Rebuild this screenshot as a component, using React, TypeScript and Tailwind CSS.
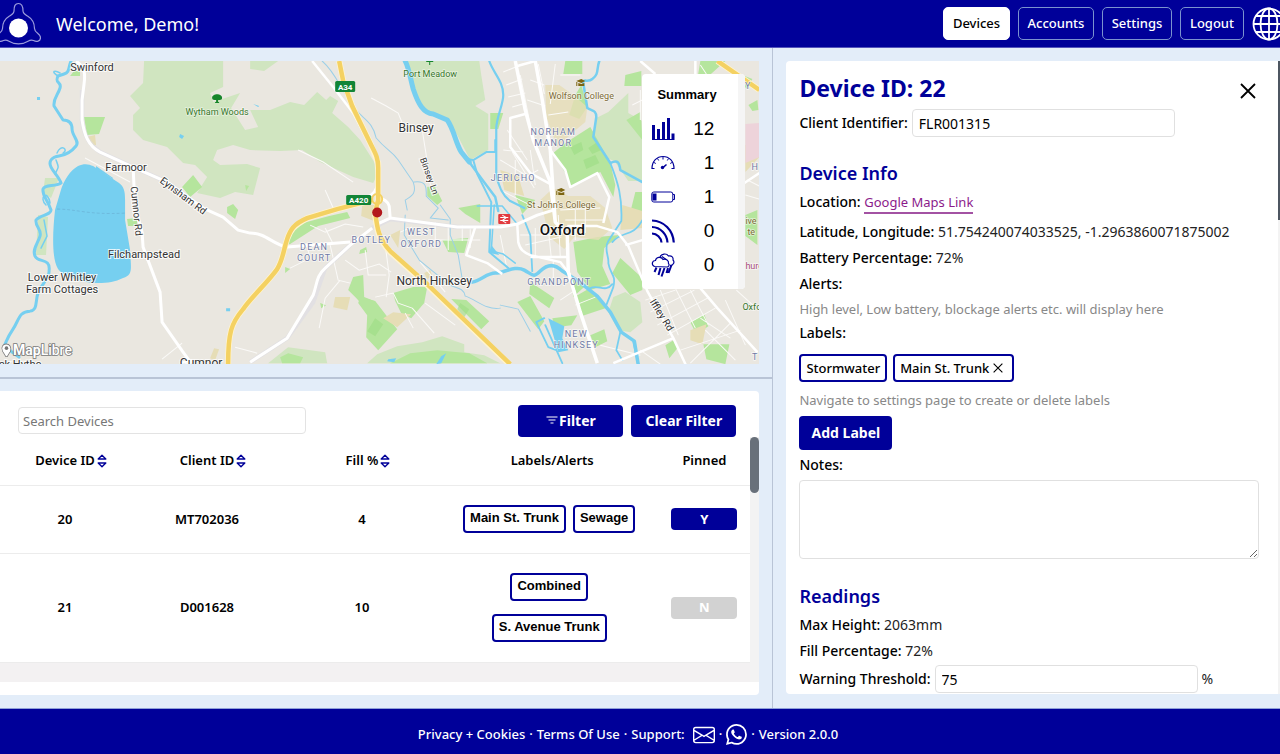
import type { ReactNode } from 'react';
import { BsEnvelope, BsWhatsapp } from 'react-icons/bs';

type Device = {
  id: number;
  clientId: string;
  fill: number;
  labels: string[];
  pinned: boolean;
};

const devices: Device[] = [
  { id: 20, clientId: 'MT702036', fill: 4, labels: ['Main St. Trunk', 'Sewage'], pinned: true },
  { id: 21, clientId: 'D001628', fill: 10, labels: ['Combined', 'S. Avenue Trunk'], pinned: false },
];

function Logo() {
  return (
    <svg width="41" height="45" viewBox="0 0 41 45" className="shrink-0" aria-hidden="true">
      <path
        d="M14 10C14 5 15 2.500 18.500 2.500S23 5 23 10c0 2.500 2 3.500 4.500 5 5 3 7 7 7 12.500 0 4.500 6 5 6 9 0 4-4 4.500-7 3-2-1-3.500-.5-5.500.7-5.500 3.500-13.500 3.500-19 0-2-1.200-3.500-1.700-5.500-.7-3 1.500-7 1-7-3s6-4.500 6-9C2.500 22 4.500 18 9.500 15c2.500-1.500 4.500-2.500 4.500-5z"
        fill="none"
        stroke="#9c9cdc"
        strokeWidth="1.200"
      />
      <circle cx="18.500" cy="27" r="9.500" fill="#fff" />
    </svg>
  );
}

function GlobeIcon() {
  return (
    <svg width="34" height="34" viewBox="0 0 34 34" fill="none" stroke="#fff" strokeWidth="1.800" aria-hidden="true">
      <circle cx="17" cy="17" r="15.500" />
      <ellipse cx="17" cy="17" rx="8.500" ry="15.500" />
      <path d="M17 1.500v31M1.500 17h31M4 9h26M4 25h26" />
    </svg>
  );
}

function SortIcon() {
  return (
    <svg width="10" height="14" viewBox="0 0 10 14" fill="none" stroke="#000099" strokeWidth="1.400" strokeLinejoin="round" aria-hidden="true">
      <path d="M1.200 5L5 1.200 8.800 5zM1.200 9L5 12.800 8.800 9z" />
    </svg>
  );
}

function CloseIcon({ size }: { size: number }) {
  return (
    <svg width={size} height={size} viewBox="0 0 16 16" stroke="currentColor" strokeWidth="1.800" aria-hidden="true">
      <path d="M1 1l14 14M15 1L1 15" />
    </svg>
  );
}

function FilterIcon() {
  return (
    <svg width="12" height="9" viewBox="0 0 12 9" stroke="#fff" strokeWidth="1.200" aria-hidden="true">
      <path d="M0.500 1h11M2.500 4h7M4.500 7h3" />
    </svg>
  );
}

/* Summary icons */
function LevelIcon() {
  return (
    <svg width="24" height="24" viewBox="0 0 24 24" fill="#000099" aria-hidden="true">
      <path d="M1 8h3v14H1zM6 12h3v10H6zM11 5h3v17h-3zM16 1h3v21h-3zM20.500 16.500h3V22h-3zM1 22h22.500v1H1z" />
    </svg>
  );
}

function GaugeIcon() {
  return (
    <svg width="24" height="24" viewBox="0 0 24 24" fill="none" stroke="#000099" aria-hidden="true">
      <path d="M3.500 17.500H1C1 10 6 5.500 12 5.500S23 10 23 17.500h-2.500" strokeWidth="1.200" />
      <path d="M12 6v2.500M6.500 7.500l1.200 2M17.500 7.500l-1.200 2M3 11.500l1.800 1M21 11.500l-1.800 1" strokeWidth="1" />
      <path d="M11.500 17l4-3.500" strokeWidth="1.600" />
      <circle cx="11.500" cy="16.500" r="1.700" fill="#000099" stroke="none" />
    </svg>
  );
}

function BatteryIcon() {
  return (
    <svg width="24" height="24" viewBox="0 0 24 24" fill="none" stroke="#000099" aria-hidden="true">
      <rect x="0.800" y="7" width="21" height="10" rx="2" strokeWidth="1" />
      <path d="M22 9.500h1.500v5H22" strokeWidth="1" />
      <rect x="1.500" y="8.500" width="4" height="7" fill="#000099" stroke="none" />
    </svg>
  );
}

function SignalIcon() {
  return (
    <svg width="24" height="24" viewBox="0 0 24 24" fill="none" stroke="#000099" strokeWidth="2.200" aria-hidden="true">
      <path d="M1 1.500C13 2 22 11 22.800 23.500M1 8c8.500.3 15 7 15.500 15.500M1 14.500c5 .2 9 4 9.500 9" />
    </svg>
  );
}

function StormIcon() {
  return (
    <svg width="24" height="24" viewBox="0 0 24 24" fill="none" stroke="#000099" strokeWidth="1.200" aria-hidden="true">
      <path d="M3.500 13.500C0 12 1 7.500 4.500 7.500 5 4 10 3 12 6.500c3-1 6 1 5.500 4 1.500 1.500 0 3.500-1.500 3.500z" />
      <path d="M9 4C10.500.5 15.500 0 17.500 3c3.500-.5 5 1.500 4.500 4 2 2 .5 5.500-3 5.500M11 3.500l4 3" />
      <path d="M5.500 14.500L3.500 19M9.500 15l-2 7M13.500 15l-3 8.500M17 15l-1.500 5M20.500 12l-3 8" strokeWidth="2" />
    </svg>
  );
}

const summary = [
  { name: 'Level', icon: <LevelIcon />, count: 12 },
  { name: 'Blockage', icon: <GaugeIcon />, count: 1 },
  { name: 'Battery', icon: <BatteryIcon />, count: 1 },
  { name: 'Signal', icon: <SignalIcon />, count: 0 },
  { name: 'Storm', icon: <StormIcon />, count: 0 },
];

function MapView() {
  return (
    <svg
      viewBox="0 61 759 303"
      preserveAspectRatio="xMinYMin slice"
      className="block h-full w-full font-['Roboto','Noto_Sans',sans-serif]"
      role="img"
      aria-label="Map of Oxford"
    >
      <rect x="0" y="61" width="759" height="303" fill="#eae7e0" />

      {/* Woodland and meadows */}
      <g fill="#d0e5c0">
        <path d="M144 61H223V87L210 93 213 102 240 93 231 108 245 130 258 127 250 110 270 110 290 102 304 105 317 92 326 100 330 96 338 101 332 113 348 127 360 140 374 162 376 177 373 183 353 177 320 162 302 150 280 151 250 150 233 145 217 150 213 160 220 165 247 164 260 168 253 195 235 192 220 198 197 193 207 177 195 165 183 163 167 147 143 140 133 130 133 115 140 108 130 96 143 83z" />
        <path d="M407 61H479L481 75 485 100 475 106 488 114V150L470 160 457 135 447 121 423 112 412 85z" />
        <path d="M250 61h28l-14 10-14-2z" />
        <path d="M596 118l12-6 20-19v20l14 8v60h-14l-14-20-13-5-8-19z" />
        <path d="M613 297l12-5 15 10 2 20-12 10-12-2-10-18z" />
        <path d="M367 363l10-9 20-8 25-4 20-6 22 8 0 8 20 3 16 8z" />
        <path d="M268 363l20-16 15 2 22 3 2 11z" />
        <path d="M45 178h14l-8 20-8-5zM38 215l10 2-2 38-10 0z" />
      </g>

      {/* Parks */}
      <g fill="#b5e59d">
        <path d="M553 153l12-10 25-16 9 16 11 20 5 22-2 12-13-25-29 15-6-14z" />
        <path d="M573 242l24-5 22-2-15 13-2 18 8 18-20 6-13-18z" />
        <path d="M620 258l22 20v12l-12 5-18-22zM574 297l14-8 20 18-27 9zM570 275l16 10-13 12z" />
        <path d="M530 282l24 16-5 10-20-14zM517 302l13-6 14 25-6 8zM552 318l25-3-6 10-16 2z" />
        <path d="M284 245l6-12 13-10 26-7 18-4 3 6-32 8-28 18z" />
        <path d="M353 277l10-2 1 22 10 4-6 10-12-13-8-8z" />
        <path d="M360 297l15 4 14 18 8 10-19 21-12-13 1-22-9-12z" />
        <path d="M393 293l20-6 14 0-3 16-13 15-10-5-6-12z" />
        <path d="M451 299l15 1 23 21-8 8zM442 240l26-2-4 15-16-1zM458 208l22-4v19l-15-9z" />
        <path d="M84 117h17l4 0-6 17-12 1zM193 175l9 12-12 10-8-10zM227 207l6-3 5 6-3 9-8-6z" />
        <path d="M427 187l7-2 8 16-5 4-10-9zM70 76l4-5 6 0v5zM127 219l10-1v8h-9z" />
        <path d="M390 363l20-10 27-3 32 3 18 10zM280 357l8-4 15 4-3 6h-18z" />
        <path d="M640 112l-14 8 16 20zM625 75l16-4v15h-17zM565 61h17v13h-19zM575 95l6-10 6 22-8 12-10-4z" />
        <path d="M700 61h25l-20 18h-8zM737 73l15 6-6 10zM748 105l9-5 1 10-6 1z" />
        <path d="M703 344h26l-4 20-19-5zM690 322l14-8 4 12-12 8zM665 345l8-5 4 8-8 10zM745 215l12-5v35l-12-9zM635 192h7v20h-12z" />
        <path d="M590 335l14-6 3 12-12 6zM515 195l20 5-13 14zM503 113l-5 16-8 0v-16z" />
        <path d="M360 250l6-3 1 5-8 2zM285 267l5 2-5 4zM320 303l6 2-5 3zM245 185l4 1-3 5z" />
      </g>
      <g fill="#9ddc84" opacity=".6">
        <path d="M570 147l11-5 2 8-9 5zM583 160l12-5 4 8-13 6zM588 148l9-6 4 8-9 4zM375 318l8 6-8 12-8-5zM460 303l9 6-5 8-7-8z" />
      </g>

      {/* Built-up and campus areas */}
      <g fill="#e6ddb6">
        <path d="M545 85h14l14 10 14 12-2 15-12 10-16 15-11-30zM540 200l13-12 15 8 22 0 15 12 7 20-14 12-24-3-10 12-15-12z" opacity=".8" />
        <path d="M335 297h15l-3 13-14-3zM383 318l10-6 18 2-14 13zM362 205h14l-2 16-13-5zM390 235l10-5-2 18zM87 137l8-2 1 10-6 1zM214 348l5 1-4 11-5-2zM424 273l6-3 2 6-5 3z" />
        <path d="M622 205l20 6v17l-22 2zM500 170l18 6 6 20-20-6zM690 330l16-6-4 20-12-4zM745 145h14v12l-14 15zM508 178l10-3 4 15-9 2z" />
      </g>
      <path d="M745 124l14-1v34l-14 6z" fill="#edd3da" />

      {/* Minor streets */}
      <g fill="none" stroke="#fbfaf8" strokeWidth="1">
        <path d="M371 98l15 8 12 7 4 10 12 5M422 130l4 25v20l7 15M325 190l8 18M298 150l25 12 30 20" />
        <path d="M310 225l15 7 20-8 18 3M330 245l8 35 12 3M345 260l14 10 20-6 12 8M365 250l3 25 18 0M385 245l4 30-3 22M375 297l18-4 5 10 14 5M340 280l-15 18-6 30M290 268l20-10-4-15M325 228l8 16M405 313l8 15M425 303l30 22M412 308l22 25" />
        <path d="M400 232l12-5M435 222v24M448 224v26M462 225v16M470 228v20M430 240h50M420 262l25 30M500 235l6 30" />
        <path d="M503 72l20-8M506 85l16-6M508 97l17-4M512 107l14-4M520 75l10 50M530 80l14 5M527 100l18 6M535 128l15 6M538 64l6 30M507 130l20 30M512 152l22 36M500 160l34 20M503 150l20 2M500 190l28 14M515 160v35M530 150l5 35M520 180l18-10M555 64l-5 40M560 75h20M548 115l20-3" />
        <path d="M520 235h30M525 245l36-8M535 228v28M548 228l3 30M558 215l2 42M575 210v30M585 205v28M565 220h40M560 210l40-2" />
        <path d="M553 260v20M575 290l-15 10M575 305l20-8M600 345l40 10M645 300l30-10M650 312l44-22M657 325l52-28M667 335l48-27M660 290l18 45M675 288l20 40M690 290l18 35M700 318l30 20M680 350l60-20M690 363l40-40M725 300l20 45M736 290l22 20M705 330l30 30M640 350l20 14" />
        <path d="M632 105l10-5M640 90v30M700 65l6 9M747 180l12 6M745 195l14 4M85 158l45 24M182 343l-20 16M235 347l22 6" />
      </g>

      {/* Water */}
      <g fill="none" stroke="#76cff0" strokeLinejoin="round" strokeLinecap="round">
        <path d="M71 61c-3 7-1 11-7 13l-6 2c-4 8 4 5 2 12s-7 10-6 18l9 14c5 0 9 2 9 9s8 12 4 17-10 9-17 10-11 5-8 11 8 10 10 16c-6 4-16 1-18 6-1 7 4 9 8 21 0 5-11 5-15 10-1 7 6 9 4 16s-8 13-5 20 16 1 14 15c1 6-8 14-11 22s0 17-8 18c-11 0-11 9-17 18s-6 11-8 15l7 8 7 5" strokeWidth="3" />
        <path d="M58 76c-8-5-3-6 2-3M57 153c4-10 12-3 6 0M56 160c3 8 3 6-1 14M46 205c-8-8 2-16 4-2M44 220l3 16-6 12" strokeWidth="1.500" />
        <path d="M405 61c4 8 5 17 8 28 5 15 10 24 20 25l14 6c7 10 8 22 14 32l8 10" strokeWidth="5" />
        <path d="M469 162l14 19 12 16 3 14" strokeWidth="2.500" />
        <path d="M456 140c6 14 10 20 17 20l13-8h9v-12M473 160l4 14 14 28-2 50 19 16" strokeWidth="2" />
        <path d="M489 61c4 12 14 20 14 34 0 10-7 22-7 34v45c2 12 7 22 14 27l14 7" strokeWidth="2.200" />
        <path d="M477 206h25l15 18M494 205l-3 46 12 3 12 9" strokeWidth="1.500" />
        <path d="M472 282c9-2 15-9 23-9s20-8 29-3 9 8 16 1 14-8 22 0l16 10 19 15 13 16 11 20 13 9 4 24" strokeWidth="3.500" />
        <path d="M599 61c-3 8 0 13-7 18-4 4-10-1-9 4l4 25c5 3 9 2 9 9l-3 20 17 26c8-4 9 0 10 7l22 12" strokeWidth="2.500" />
        <path d="M610 163c8 20 12 34 11 58l-13 20c-5 8 1 15 0 22 2 12 8 11 5 24l-7 18M620 332l-4 18 6 10M633 342l5 22M642 220c-10 18-20 10-30 22M590 288c8-4 15 5 22-4M522 215l8 20 2 36M545 325l17 38M544 318l-8 4 12 25 8 3" strokeWidth="1.800" />
        <path d="M322 61c14 12 18 28 30 43 8 15 20 15 24 34 10 12 15 12 22 22l15 22c4 12-2 14-8 18l2 10M414 182c14-2 12 8 12 14l12 12-8 10 18 2M405 215l-1 20 15 25 22 18c8 12 22 6 24 18 12 4 20 14 35 12M440 205l10 14v16l8 20 4 24M500 305l18 4 12 22" strokeWidth="1" stroke="#9bcfe8" />
      </g>
      <g fill="#76cff0">
        <path d="M55 210l5-17c4-14 10-22 18-27 6-3 11-2 15 0l26 17c5 4 6 8 6 17v20l5 30c1 20 3 24-7 28-8 4-15 5-25 5-14 0-34-6-40-14-7-12-5-40-3-59z" />
        <path d="M548 318l16 8-2 12 6 12-10 2zM96 166l17 12 0 1-17-10zM180 134l4 2-2 3-3-2zM37 97h3v3h-3zM253 104l6 2-1 1zM226 308h4v3h-4zM388 359l8-1-2 4-7-1zM436 364l5-8 5-3-5 10zM491 245l8 10-10-2z" />
      </g>
      <path d="M57 209c20 0 30 6 68 4" fill="none" stroke="#6ab2d6" strokeDasharray="3 2" strokeWidth=".7" />

      {/* Main roads */}
      <g fill="none" stroke="#dcdce4" strokeWidth="4.500" opacity=".6">
        <path d="M82 90v30c2 14 6 24 18 32l33 15 34 15M372 228l18-9 67 8h43M350 245l-25 23-12 34-26 36-37 24" />
      </g>
      <g fill="none" stroke="#fff" strokeWidth="3" strokeLinejoin="round">
        <path d="M76 61c10 7 9 15 8 23l-2 16v20c2 14 6 26 18 32l33 15 34 15 36 26 20 9 15 13 12 3c16 0 22 11 37 14l63-5" />
        <path d="M133 167l2 40 7 25 1 15 17 45 2 30 21 30 8 11" />
        <path d="M377 224l13-6 67 9h43l17-3 20-9 16-5M390 218l-1-12c-1-5-6-7-11-9M372 228l-22 17-25 23c-9 8-8 16-12 27l-26 43-37 24" />
        <path d="M312 61l21 26 20 26 20 37c4 12 5 28 4 36-3 8-8 12-17 12" strokeWidth="2.500" />
        <path d="M515 61l10 49 8 30 17 42 5 40M535 61l7 39 8 50 5 72 12 13 1 37 12 40 17 51" strokeWidth="3.500" />
        <path d="M525 114l-15 4v29l20 26 22 12M550 150l15 20 5 17 27-14 12 24-6 26M517 224l1 18c2 8 5 10 12 13l30 7 10 13M567 226h30l20 6 11 14 19 45 26 47 13 28M673 338l-60 25M700 288l17 20 40 44M640 61l15 13M695 61v13M738 187l21-14M517 66l18-5M475 227l-9 28 21 8 15 11M530 257h37M625 245l17-5M180 363l12-3" strokeWidth="2.500" />
      </g>
      <g fill="none" stroke="#fff4cf" strokeWidth="6">
        <path d="M339 61l4 20 9 25 18 37 8 20v37l-3 15c2 16 3 24 15 37l37 33 82 79M372 200l-35 9-30 9c-14 8-17 12-20 21-4 12-4 20-10 30-10 14-26 28-34 40-12 14-15 24-15 55M717 61l42 29" />
      </g>
      <g fill="none" stroke="#f4d162" strokeWidth="4.500">
        <path d="M339 61l4 20 9 25 18 37c5 10 8 14 8 25v32l-3 12c2 16 3 26 15 39l37 33 83 80M372 200l-35 9-30 9c-14 6-17 12-20 21-4 12-4 20-10 30-10 14-26 28-34 40-12 14-15 24-15 55M717 61l42 29" />
        <circle cx="377" cy="199" r="5" strokeWidth="2" />
      </g>

      {/* Road shields */}
      <g fill="#128537">
        <rect x="335" y="81" width="20" height="11" rx="1.500" />
        <rect x="346" y="195" width="25" height="10" rx="1.500" />
      </g>
      <g fill="#fff" fontSize="8" fontWeight="700" textAnchor="middle">
        <text x="345" y="90">A34</text>
        <text x="358.500" y="203">A420</text>
      </g>

      {/* Place names */}
      <g fill="#333" stroke="#fff" strokeOpacity=".8" strokeWidth="2" paintOrder="stroke" fontSize="11" textAnchor="middle">
        <text x="92" y="71">Swinford</text>
        <text x="126" y="171">Farmoor</text>
        <text x="144" y="258">Filchampstead</text>
        <text x="62" y="281">Lower Whitley</text>
        <text x="62" y="293">Farm Cottages</text>
        <text x="416" y="132" fontSize="12">Binsey</text>
        <text x="434" y="285" fontSize="12">North Hinksey</text>
        <text x="201" y="367" fontSize="12">Cumnor</text>
        <text x="20" y="368">ck Hythe</text>
        <text x="562" y="235" fontSize="15" fontWeight="500" fill="#111">Oxford</text>
        <text x="183" y="199" fontSize="10" transform="rotate(37 183 196)">Eynsham Rd</text>
        <text x="136" y="214" fontSize="10" transform="rotate(84 136 211)">Cumnor Rd</text>
        <text x="429" y="179" fontSize="9" transform="rotate(70 429 176)">Binsey Ln</text>
        <text x="661" y="318" fontSize="10" transform="rotate(58 661 315)">Iffley Rd</text>
      </g>
      <g fill="#6f7aa5" stroke="#fff" strokeOpacity=".7" strokeWidth="1.500" paintOrder="stroke" fontSize="9" letterSpacing="1.200" textAnchor="middle">
        <text x="314" y="250">DEAN</text>
        <text x="314" y="261">COURT</text>
        <text x="371" y="243">BOTLEY</text>
        <text x="421" y="235">WEST</text>
        <text x="421" y="247">OXFORD</text>
        <text x="553" y="135">NORHAM</text>
        <text x="553" y="146">MANOR</text>
        <text x="513" y="181">JERICHO</text>
        <text x="559" y="285">GRANDPONT</text>
        <text x="576" y="337">NEW</text>
        <text x="576" y="348">HINKSEY</text>
        <text x="748" y="89">Y</text>
        <text x="755" y="170">H</text>
        <text x="755" y="360">T</text>
      </g>
      <g fill="#37762b" stroke="#fff" strokeOpacity=".5" strokeWidth="1.500" paintOrder="stroke" fontSize="9" textAnchor="middle">
        <text x="217" y="115">Wytham Woods</text>
        <text x="430" y="77">Port Meadow</text>
        <text x="742" y="310" textAnchor="start">Oxford</text>
      </g>
      <g fill="#17852b">
        <path d="M212 98c0-5 10-5 10 0 0 2-2 2-4 2v2h1v1h-4v-1h1v-2c-2 0-4 0-4-2zM426 61h7v1h-3v3h-1v-3h-3z" />
      </g>
      <g fill="#7d6a35" stroke="#fff" strokeOpacity=".6" strokeWidth="1.500" paintOrder="stroke" fontSize="9" textAnchor="middle">
        <text x="581" y="99">Wolfson College</text>
        <text x="561" y="208">St John’s College</text>
        <text x="745" y="224" textAnchor="start">ive</text>
        <text x="747" y="235" textAnchor="start">te</text>
        <text x="745" y="269" textAnchor="start" fill="#a84b7b">hurch</text>
      </g>
      <g fill="#7d6510">
        <path d="M576 81l5-2 4 2-4 2zM578 83l3 1 3-1v3h-6zM577 82v4h-1v-4zM556 190l5-2 4 2-4 2zM558 192l3 1 3-1v3h-6zM557 191v4h-1v-4z" />
      </g>

      {/* Railway station */}
      <rect x="498" y="214" width="12" height="10" rx="1" fill="#e23b3f" />
      <path d="M500 217.500h8M500 220.500h8M502 215l4 2.500-4 3 4 2.500" stroke="#fff" fill="none" />

      {/* Device pin */}
      <circle cx="377" cy="212.500" r="5" fill="#b3181c" />

      {/* Attribution */}
      <g fill="#fff" stroke="#777" strokeWidth="1.600" paintOrder="stroke">
        <path d="M6 356l-3-5c-4-9 10-9 7 0l-3 5z" />
        <circle cx="6.500" cy="348" r="1.800" fill="#777" stroke="none" />
        <text x="13" y="355" fontSize="14" fontWeight="700">Map<tspan fontWeight="500">Libre</tspan></text>
      </g>
    </svg>
  );
}

function Field({ label, children }: { label: string; children?: ReactNode }) {
  return (
    <p className="h-[26px] leading-[26px]">
      <span className="font-medium text-black">{label}:</span> {children}
    </p>
  );
}

const tag = 'flex h-7 items-center rounded border-2 border-[#000099] px-[5px] text-[13px] text-black';
const navButton = 'h-[33px] rounded-[5px] border text-[13px] font-medium';
const filterButton = 'flex h-8 w-[105px] items-center justify-center gap-px rounded bg-[#000099] text-sm font-bold text-white';

export default function App() {
  return (
    <div className="flex h-screen flex-col overflow-hidden bg-[#e3edf9] font-['Noto_Sans',sans-serif] text-sm text-[#222]">
      <header className="flex h-12 shrink-0 items-center overflow-hidden border-b border-[#5555bb] bg-[#000099] text-white">
        <Logo />
        <h1 className="ml-[15px] text-lg">Welcome, Demo!</h1>
        <nav className="-mr-[6px] ml-auto flex items-center gap-2">
          <button className={`${navButton} w-[67px] border-white bg-white text-black`}>Devices</button>
          <button className={`${navButton} w-[76px] border-[#7b93cf]`}>Accounts</button>
          <button className={`${navButton} w-[70px] border-[#7b93cf]`}>Settings</button>
          <button className={`${navButton} w-16 border-[#7b93cf]`}>Logout</button>
          <button aria-label="Language" className="shrink-0">
            <GlobeIcon />
          </button>
        </nav>
      </header>

      <main className="flex min-h-0 flex-1">
        <div className="flex min-w-0 flex-[773] flex-col border-r border-[#b9c4d6]">
          {/* Map */}
          <section className="relative mt-[13px] mr-[13px] min-h-0 flex-1 overflow-hidden">
            <MapView />
            <div className="absolute top-[13px] right-[14px] flex h-[215px] w-[103px] overflow-hidden rounded bg-white font-['Liberation_Sans',sans-serif] text-black">
              <div className="flex-1 px-[9px]">
                <h2 className="mt-3 mb-2 pl-[6px] text-[13px] leading-[18px] font-bold whitespace-nowrap">Summary</h2>
                <ul>
                  {summary.map((item) => (
                    <li key={item.name} className="flex h-[34px] w-[63px] items-center justify-between">
                      {item.icon}
                      <span className="text-[19px]">{item.count}</span>
                    </li>
                  ))}
                </ul>
              </div>
              <div className="w-[7px] bg-[#f5f5f5]" />
            </div>
          </section>

          <div className="mt-[13px] h-[2px] shrink-0 bg-[#b9c4d6]" />

          {/* Devices */}
          <section className="mt-3 mr-[13px] mb-[13px] flex h-[304px] shrink-0 flex-col rounded-r bg-white pt-[13px] pb-[13px]">
            <div className="flex h-[33px] shrink-0 items-center pr-[23px] pl-[18px]">
              <input
                type="search"
                aria-label="Search Devices"
                placeholder="Search Devices"
                className="h-[27px] w-[288px] rounded border border-[#e3e3e3] px-1 text-[13px] placeholder:text-[#777]"
              />
              <div className="ml-auto flex gap-2">
                <button className={filterButton}>
                  <FilterIcon />
                  Filter
                </button>
                <button className={filterButton}>Clear Filter</button>
              </div>
            </div>
            <div className="flex min-h-0 flex-1 overflow-hidden">
              <div className="min-w-0 flex-1 overflow-hidden">
                <table className="w-full table-fixed text-center text-[13px] text-black">
                  <colgroup>
                    <col className="w-[130px]" />
                    <col className="w-[154px]" />
                    <col className="w-[156px]" />
                    <col />
                    <col className="w-[92px]" />
                  </colgroup>
                  <thead>
                    <tr className="h-12 border-b border-[#ececec]">
                      {['Device ID', 'Client ID', 'Fill %'].map((name) => (
                        <th key={name} className="pl-3 font-semibold">
                          <button className="inline-flex items-center gap-[2px]">
                            {name}
                            <SortIcon />
                          </button>
                        </th>
                      ))}
                      <th className="pl-[6px] font-semibold">Labels/Alerts</th>
                      <th className="font-semibold">Pinned</th>
                    </tr>
                  </thead>
                  <tbody className="font-semibold">
                    {devices.map((device) => (
                      <tr key={device.id} className="border-b border-[#ececec]">
                        <td>{device.id}</td>
                        <td>{device.clientId}</td>
                        <td>{device.fill}</td>
                        <td className="pt-[19px] pb-5">
                          <div className="mx-auto flex w-[190px] flex-wrap justify-center gap-x-[7px] gap-y-[13px] font-['Liberation_Sans',sans-serif] font-bold">
                            {device.labels.map((label) => (
                              <span key={label} className={tag}>
                                {label}
                              </span>
                            ))}
                          </div>
                        </td>
                        <td>
                          <button
                            className={`h-[22px] w-[66px] rounded font-bold text-white ${device.pinned ? 'bg-[#000099]' : 'bg-[#d2d2d2]'}`}
                          >
                            {device.pinned ? 'Y' : 'N'}
                          </button>
                        </td>
                      </tr>
                    ))}
                    <tr className="h-16 bg-[#f3f1f2]">
                      <td colSpan={5} />
                    </tr>
                  </tbody>
                </table>
              </div>
              <div className="w-[9px] bg-[#f3f3f3]">
                <div className="h-14 rounded-full bg-[#68707a]" />
              </div>
            </div>
          </section>
        </div>

        {/* Device details */}
        <aside className="mt-[13px] mb-[14px] ml-[13px] flex min-w-0 flex-[494] overflow-hidden rounded-l bg-white">
          <div className="min-w-0 flex-1 overflow-hidden pt-[13px] pr-[19px] pl-[13px]">
            <div className="flex h-7 items-center justify-between">
              <h2 className="text-[23px] leading-7 font-bold text-[#000099]">Device ID: 22</h2>
              <button aria-label="Close" className="mt-[6px] mr-[3px] text-black">
                <CloseIcon size={16} />
              </button>
            </div>
            <div className="mt-[7px] flex h-7 items-center gap-1">
              <label htmlFor="client" className="font-medium text-black">
                Client Identifier:
              </label>
              <input
                id="client"
                defaultValue="FLR001315"
                className="h-7 w-[263px] rounded border border-[#e0e0e0] px-[6px] text-black"
              />
            </div>

            <h3 className="mt-[22px] mb-[2px] text-lg leading-7 font-semibold text-[#000099]">Device Info</h3>
            <Field label="Location">
              <a href="#map" className="inline-block h-[25px] border-b-2 border-[#a352a3] text-[13px] text-[#8b1a8b]">
                Google Maps Link
              </a>
            </Field>
            <div className="mt-1">
              <Field label="Latitude, Longitude">51.754240074033525, -1.2963860071875002</Field>
              <Field label="Battery Percentage">72%</Field>
              <Field label="Alerts" />
            </div>
            <p className="text-[13px] leading-6 text-[#888]">High level, Low battery, blockage alerts etc. will display here</p>
            <p className="leading-6 font-medium text-black">Labels:</p>
            <div className="mt-[9px] flex gap-[6px] font-medium">
              <span className={tag}>Stormwater</span>
              <span className={tag}>
                Main St. Trunk
                <button aria-label="Remove Main St. Trunk" className="mr-1 ml-1">
                  <CloseIcon size={10} />
                </button>
              </span>
            </div>
            <p className="mt-[6px] text-[13px] leading-6 text-[#888]">Navigate to settings page to create or delete labels</p>
            <button className="mt-1 block h-[34px] w-[93px] rounded bg-[#000099] font-bold text-white">Add Label</button>
            <label htmlFor="notes" className="mt-[2px] block leading-[26px] font-medium text-black">
              Notes:
            </label>
            <textarea id="notes" className="mt-[2px] block h-[79px] w-full rounded border border-[#e0e0e0]" />

            <h3 className="mt-[23px] mb-[2px] text-lg leading-7 font-semibold text-[#000099]">Readings</h3>
            <Field label="Max Height">2063mm</Field>
            <Field label="Fill Percentage">72%</Field>
            <div className="mt-px flex h-7 items-center gap-1">
              <label htmlFor="warning" className="font-medium text-black">
                Warning Threshold:
              </label>
              <input
                id="warning"
                defaultValue="75"
                className="h-7 w-[263px] rounded border border-[#e0e0e0] px-[6px] text-black"
              />
              %
            </div>
          </div>
          <div className="w-[2px] bg-[#f3f3f3]">
            <div className="h-[159px] bg-[#4d5661]" />
          </div>
        </aside>
      </main>

      <footer className="flex h-[46px] shrink-0 items-center justify-center gap-1 border-t border-[#8fa0d8] bg-[#000099] pt-[6px] pr-6 text-[13px] font-medium text-white">
        <a href="#privacy">Privacy + Cookies</a>
        <span>·</span>
        <a href="#terms">Terms Of Use</a>
        <span>·</span>
        <span>Support:</span>
        <a href="#email" aria-label="Email" className="ml-1">
          <BsEnvelope size={22} />
        </a>
        <span>·</span>
        <a href="#whatsapp" aria-label="WhatsApp">
          <BsWhatsapp size={21} />
        </a>
        <span>·</span>
        <span>Version 2.0.0</span>
      </footer>
    </div>
  );
}
